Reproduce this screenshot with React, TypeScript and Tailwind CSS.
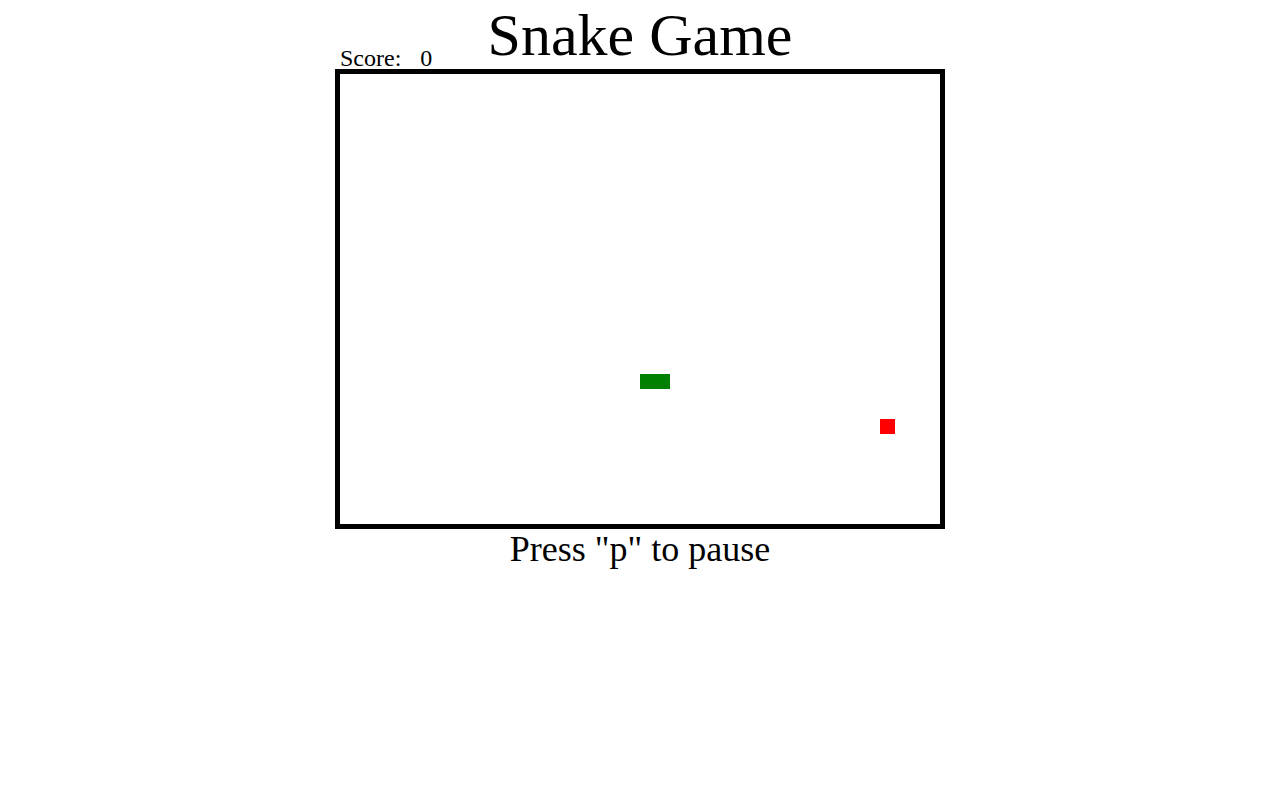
import React from "react";

const CELL = 15;

// snake body cells and food, in grid coordinates
const snake = [
  { x: 20, y: 20 },
  { x: 21, y: 20 },
];
const food = { x: 36, y: 23 };

const App: React.FunctionComponent = () => {
  return (
    <div
      className="w-full h-[800px] bg-white text-black flex flex-col items-center"
      style={{ fontFamily: '"Liberation Serif", "Times New Roman", serif' }}
    >
      <div className="w-[610px] grid grid-cols-[1fr_auto_1fr] h-[69px]">
        <div className="flex items-end pl-[5px]">
          <span className="text-[24px] leading-[22px]">
            Score:<span className="ml-[19px]">0</span>
          </span>
        </div>
        <h1 className="text-[60px] leading-none pt-[5px] font-normal">
          Snake Game
        </h1>
        <div />
      </div>

      <div className="relative w-[610px] h-[460px] border-[5px] border-black">
        {snake.map((s, i) => (
          <div
            key={i}
            className="absolute bg-[#008000]"
            style={{ left: s.x * CELL, top: s.y * CELL, width: CELL, height: CELL }}
          />
        ))}
        <div
          className="absolute bg-[#ff0000]"
          style={{ left: food.x * CELL, top: food.y * CELL, width: CELL, height: CELL }}
        />
      </div>

      <p className="text-[36px] leading-none mt-[2px]">Press "p" to pause</p>
    </div>
  );
};

export default App;
